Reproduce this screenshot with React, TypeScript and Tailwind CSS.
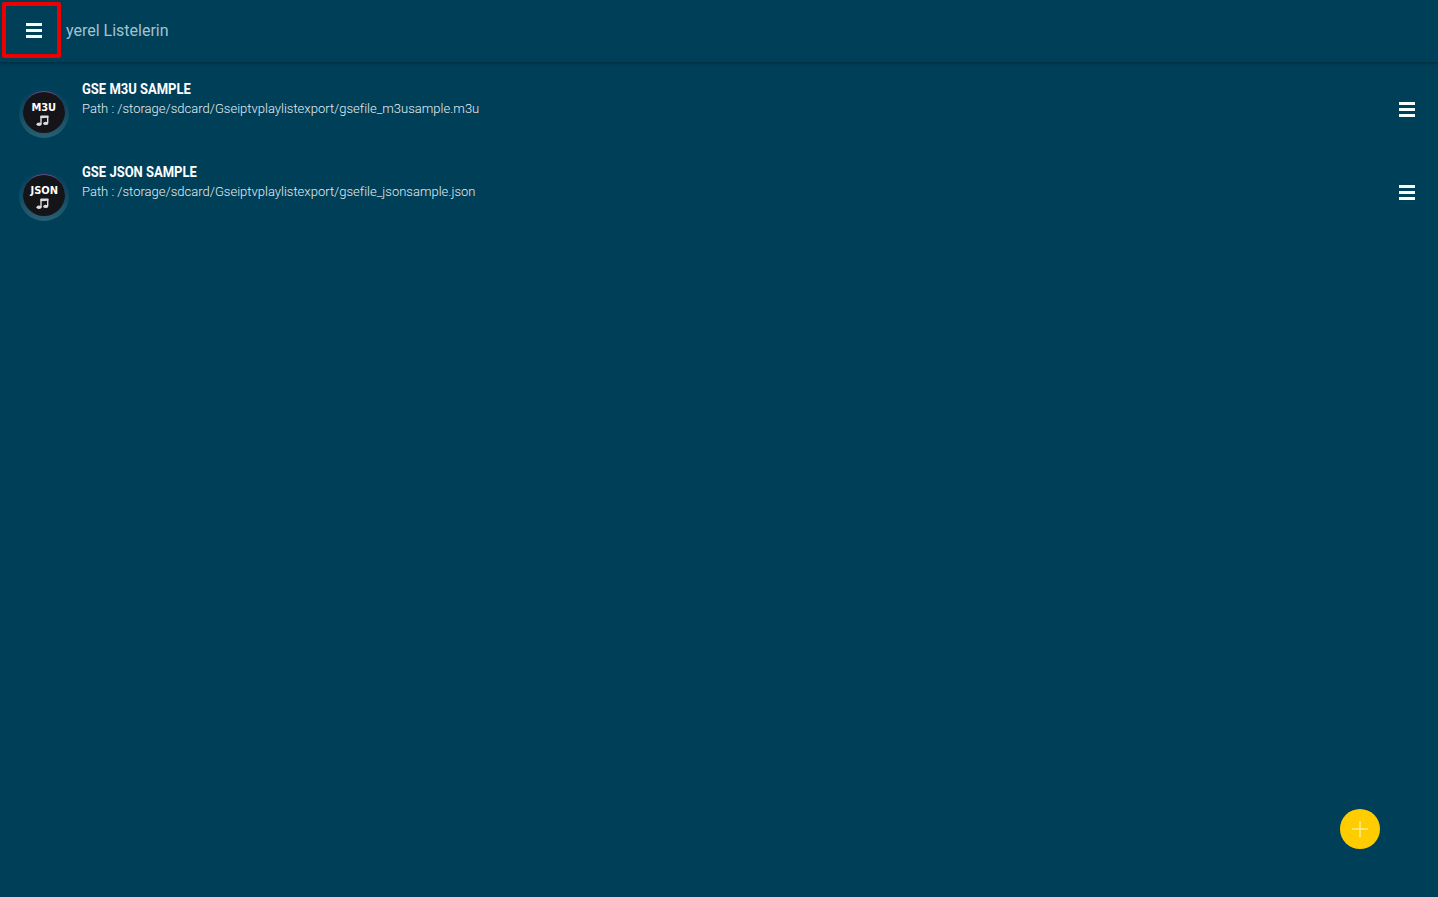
import React from "react";

const rows = [
  { label: "M3U", title: "GSE M3U SAMPLE", path: "Path : /storage/sdcard/Gseiptvplaylistexport/gsefile_m3usample.m3u" },
  { label: "JSON", title: "GSE JSON SAMPLE", path: "Path : /storage/sdcard/Gseiptvplaylistexport/gsefile_jsonsample.json" },
];

function Bars({ className }: { className: string }) {
  return (
    <div className={`flex flex-col justify-between ${className}`}>
      <div className="h-[3px] bg-[#f2ffff]" />
      <div className="h-[3px] bg-[#f2ffff]" />
      <div className="h-[3px] bg-[#f2ffff]" />
    </div>
  );
}

function Note() {
  return (
    <svg width="13" height="11" viewBox="0 0 13 11" className="mt-[1px] mr-[3px]">
      <path d="M4.6 0.6 H12.4 V2.8 L4.6 3.2 Z" fill="#dcdcdc" />
      <path d="M5 1 V9 M11.7 1 V8" fill="none" stroke="#dcdcdc" strokeWidth="1.4" />
      <ellipse cx="3" cy="9.2" rx="2.5" ry="1.7" fill="#dcdcdc" />
      <ellipse cx="9.7" cy="8.4" rx="2.5" ry="1.7" fill="#dcdcdc" />
    </svg>
  );
}

function Badge({ label }: { label: string }) {
  return (
    <div className="w-[50px] h-[50px] shrink-0 rounded-full bg-gradient-to-b from-[#033f58] via-[#0f4b62] to-[#2a5f72] flex items-center justify-center">
      <div className="w-[42px] h-[42px] mb-[3px] pt-[4px] rounded-full bg-[#151519] border-t border-t-[#6a4a8c] flex flex-col items-center justify-center">
        <div className="font-['DejaVu_Sans'] font-bold text-[11px] leading-[12px] text-white scale-x-[0.9]">{label}</div>
        <Note />
      </div>
    </div>
  );
}

export default function App() {
  return (
    <div className="relative min-h-[897px] bg-[#003f58] font-['Roboto',sans-serif]">
      <div className="h-[62px] flex items-start pl-[2px] pt-[2px] shadow-[0_1px_3px_rgba(0,0,0,0.35)]">
        <div className="w-[59px] h-[56px] border-[4px] border-[#ee0000] rounded-[2px] flex items-center justify-center pl-[5px]">
          <Bars className="w-[16px] h-[15px]" />
        </div>
        <div className="ml-[5px] mt-[17px] text-[16px] leading-[24px] text-[#a3c2cf]">yerel Listelerin</div>
      </div>
      <div className="pt-[13px]">
        {rows.map((row) => (
          <div key={row.label} className="h-[83px] flex items-start pl-[19px] pr-[23px]">
            <div className="mt-[13px]">
              <Badge label={row.label} />
            </div>
            <div className="ml-[13px] flex-1 pt-[4px]">
              <div className="font-bold text-[15px] leading-[20px] text-white origin-left scale-x-[0.866]">{row.title}</div>
              <div className="font-light text-[13px] leading-[18px] mt-[1px] tracking-[0.008px] text-[#e4eef2]">{row.path}</div>
            </div>
            <Bars className="w-[16px] h-[15px] mt-[27px]" />
          </div>
        ))}
      </div>
      <div className="absolute left-[1340px] top-[809px] w-[40px] h-[40px] rounded-full bg-[#ffcc00] flex items-center justify-center">
        <svg width="18" height="18" viewBox="0 0 18 18">
          <path d="M9 1 V17 M1 9 H17" stroke="#ffee8c" strokeWidth="1.5" />
        </svg>
      </div>
    </div>
  );
}
